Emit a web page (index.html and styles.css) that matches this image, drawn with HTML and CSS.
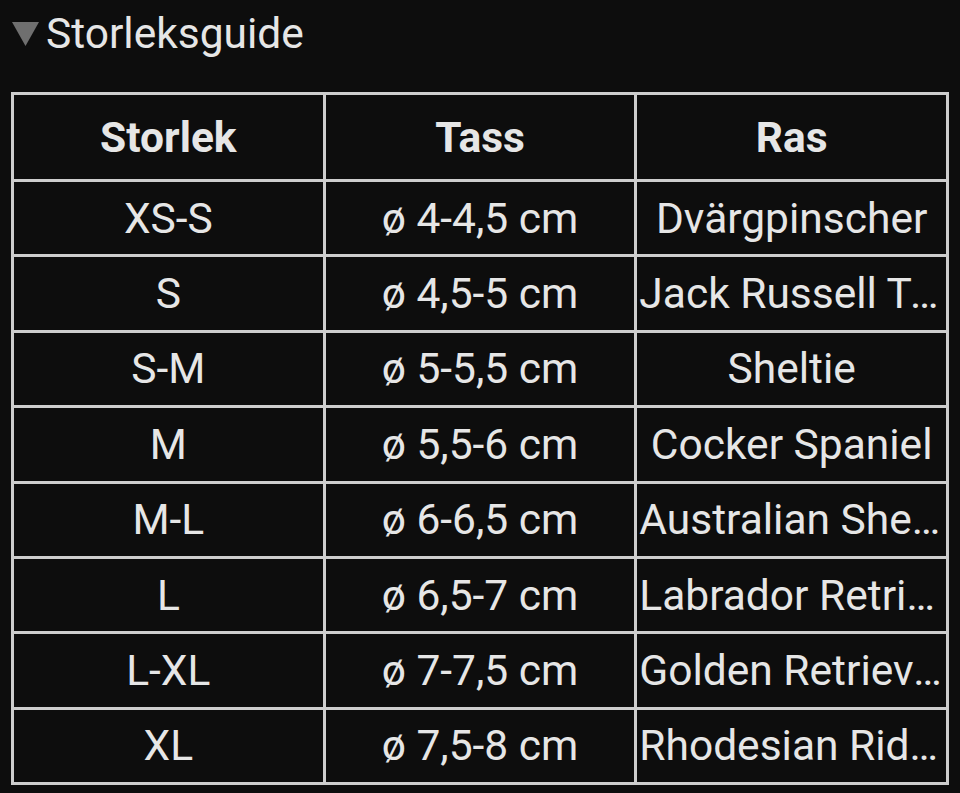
FILE: index.html
```html
<!DOCTYPE html>
<html lang="sv">
<head>
<meta charset="utf-8">
<title>Storleksguide</title>
<link rel="stylesheet" href="styles.css">
</head>
<body>
<div class="guide">
  <div class="summary">
    <svg class="caret" width="27" height="24" viewBox="0 0 27 24"><polygon points="0,0 27,0 13.5,24" fill="#6f6f6f"/></svg>
    <span class="title">Storleksguide</span>
  </div>
  <table class="sizes">
    <colgroup><col><col><col></colgroup>
    <thead>
      <tr class="head"><th>Storlek</th><th>Tass</th><th>Ras</th></tr>
    </thead>
    <tbody>
      <tr><td>XS-S</td><td>ø 4-4,5 cm</td><td>Dvärgpinscher</td></tr>
      <tr><td>S</td><td>ø 4,5-5 cm</td><td>Jack Russell Terrier</td></tr>
      <tr><td>S-M</td><td>ø 5-5,5 cm</td><td>Sheltie</td></tr>
      <tr><td>M</td><td>ø 5,5-6 cm</td><td>Cocker Spaniel</td></tr>
      <tr><td>M-L</td><td>ø 6-6,5 cm</td><td>Australian Shepherd</td></tr>
      <tr><td>L</td><td>ø 6,5-7 cm</td><td>Labrador Retriever</td></tr>
      <tr><td>L-XL</td><td>ø 7-7,5 cm</td><td>Golden Retriever</td></tr>
      <tr><td>XL</td><td>ø 7,5-8 cm</td><td>Rhodesian Ridgeback</td></tr>
    </tbody>
  </table>
</div>
</body>
</html>
```
FILE: styles.css
```css
html, body {
  margin: 0;
  background: #0d0d0d;
}
body {
  font-family: Roboto, "Noto Sans", sans-serif;
  color: #e6e6e6;
}
.guide {
  padding: 9px 12px 0 11px;
}
.summary {
  display: flex;
  align-items: center;
  gap: 7px;
  height: 49px;
  margin-left: 1px;
}
.caret {
  display: block;
  margin-top: 1px;
}
.title {
  font-size: 42.5px;
  line-height: 49px;
}
.sizes {
  margin-top: 34px;
  width: 938px;
  table-layout: fixed;
  border-collapse: collapse;
  font-size: 42.5px;
}
.sizes th,
.sizes td {
  border: 3px solid #cdcdcd;
  text-align: center;
  white-space: nowrap;
  overflow: hidden;
  text-overflow: ellipsis;
  padding: 0 2px;
  line-height: 49px;
}
.sizes th {
  font-weight: 700;
}
.sizes tr.head {
  height: 87px;
}
.sizes tbody tr {
  height: 75.4px;
}
```
